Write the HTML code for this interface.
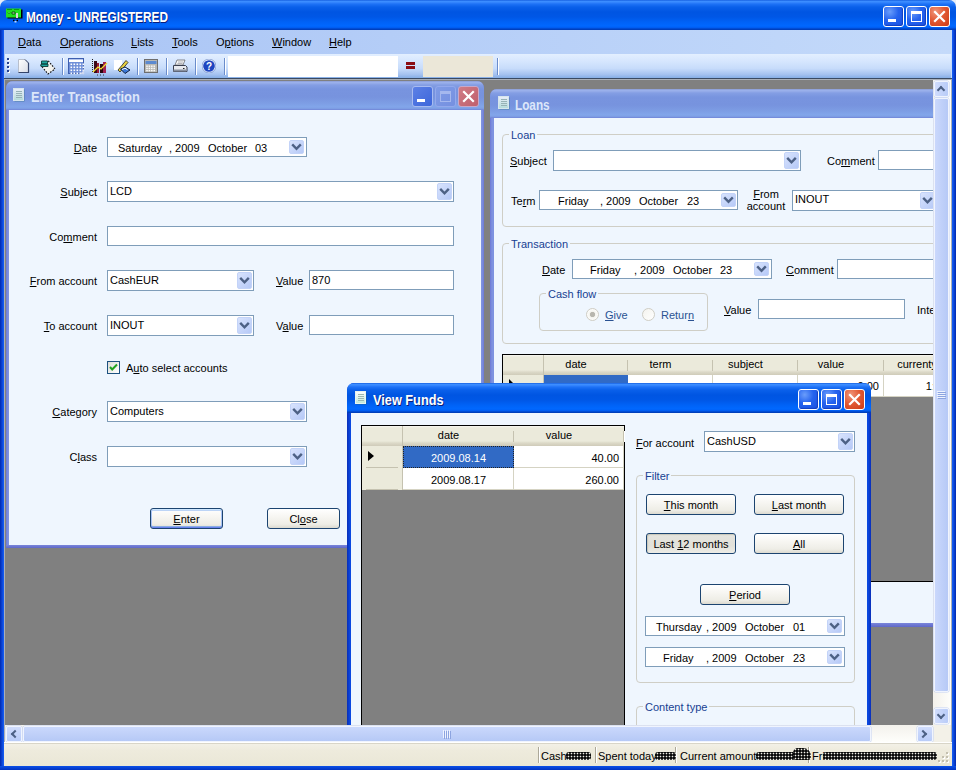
<!DOCTYPE html>
<html><head><meta charset="utf-8"><style>
*{margin:0;padding:0;box-sizing:border-box}
html,body{width:956px;height:770px;overflow:hidden;background:#808080}
body{position:relative;font-family:"Liberation Sans",sans-serif;font-size:11px;color:#000}
.a{position:absolute}
.t{position:absolute;white-space:nowrap;line-height:13px}
u{text-decoration:underline;text-underline-offset:1px}
.tb{position:absolute;background:#fff;border:1px solid #7F9DB9}
.dd{position:absolute;border-radius:2px;background:linear-gradient(135deg,#D8E3FD,#B6C9F7);border:1px solid #C3D3F8}
.dd i{position:absolute;left:4px;top:2px;width:5px;height:5px;border-right:2px solid #4D6185;border-bottom:2px solid #4D6185;transform:rotate(45deg)}
.btn{position:absolute;border:1px solid #1C4470;border-radius:3px;background:linear-gradient(#FFFFFF 0%,#F7F6F2 40%,#EEEDE6 80%,#DCDAD0 100%);text-align:center;line-height:18px;padding-top:1px}
.gb{position:absolute;border:1px solid #CFCEC6;border-radius:4px}
.gbt{color:#173F92;background:#EFF6FE}
.ttxt{position:absolute;font-weight:bold;font-size:14px;letter-spacing:0px;white-space:nowrap;line-height:15px;transform-origin:0 0}
.clip{position:absolute;overflow:hidden}
.grid-h{position:absolute;background:linear-gradient(#F7F6F0 0,#EBEADB 2px,#EBEADB 15px,#DCD9C8 17px,#CFCBB9 20px);text-align:center;line-height:19px;padding-right:20px}
.grid-h:after{content:'';position:absolute;right:0;top:5px;bottom:4px;width:1px;background:#C5C2B0;box-shadow:1px 0 0 #fff}
.rh{position:absolute;background:#EBEADB;border-right:1px solid #C5C2B0}
.rh:after{content:'';position:absolute;left:4px;right:4px;bottom:0;height:1px;background:#C5C2B0}
.cell{position:absolute;background:#fff;border-right:1px solid #D5D3C3;border-bottom:1px solid #D5D3C3;line-height:21px}
</style></head><body>
<svg width="0" height="0" style="position:absolute"><defs><linearGradient id="dg" x1="0" y1="0" x2="0" y2="1"><stop offset="0" stop-color="#FFFFFF"/><stop offset="1" stop-color="#BFE8D8"/></linearGradient></defs></svg>
<div class="a" style="left:0px;top:0px;width:956px;height:12px;background:#E8EEF8"></div>
<div class="a" style="left:0px;top:0px;width:956px;height:30px;border-radius:7px 7px 0 0;background:linear-gradient(#0A50D8 0px,#3D90FF 1px,#3A8AFF 2px,#1E72F6 4px,#0A60EA 7px,#0055E2 12px,#0057E6 17px,#0062F6 22px,#0068FF 26px,#005AEE 28px,#003FBC 29px,#003FBC 30px)"></div>
<div class="ttxt" style="left:26px;top:10px;color:#fff;transform:scaleX(0.845);text-shadow:1px 1px 0 #0A1E7A">Money - UNREGISTERED</div>
<div class="a" style="left:883px;top:6px;width:21px;height:21px;border:1px solid #fff;border-radius:3px;background:radial-gradient(circle at 30% 25%,#6A9DFB 0,#2563EE 45%,#1A4FE0 100%);box-shadow:inset -1px -1px 1px #1340C0"></div>
<div class="a" style="left:888px;top:19px;width:8px;height:3px;background:#fff"></div>
<div class="a" style="left:906px;top:6px;width:21px;height:21px;border:1px solid #fff;border-radius:3px;background:radial-gradient(circle at 30% 25%,#6A9DFB 0,#2563EE 45%,#1A4FE0 100%);box-shadow:inset -1px -1px 1px #1340C0"></div>
<div class="a" style="left:911px;top:11px;width:11px;height:11px;border:1px solid #fff;border-top-width:3px"></div>
<div class="a" style="left:929px;top:6px;width:21px;height:21px;border:1px solid #fff;border-radius:3px;background:radial-gradient(circle at 30% 25%,#F0967A 0,#E25A35 45%,#CC3A14 100%)"></div>
<svg class="a" style="left:929px;top:6px" width="21" height="21"><path d="M6 6 L15 15 M15 6 L6 15" stroke="#fff" stroke-width="2.2" stroke-linecap="square"/></svg>
<svg class="a" style="left:6px;top:8px" width="17" height="15"><rect x="1.5" y="1.5" width="15" height="9" fill="#000"/><rect x="0" y="0.5" width="15" height="9" fill="#20E020"/><path d="M1 1.5h5M8 1.5h5" stroke="#0A8A0A" stroke-width="0.8"/><path d="M2 4.5 l1 1 l1 -1 M6 4 h3 v2 h-3z" stroke="#064806" stroke-width="0.9" fill="#B8F0B8"/><rect x="10" y="5" width="2" height="5" fill="#D8D8D8"/><path d="M7 12.5h1.5M10.5 12.5h1.5" stroke="#000" stroke-width="1.4"/><rect x="8.5" y="13" width="2" height="1.5" fill="#C0D8FF"/></svg>
<div class="a" style="left:0px;top:30px;width:4px;height:740px;background:linear-gradient(90deg,#0028B0,#1660F8)"></div>
<div class="a" style="left:4px;top:79px;width:1px;height:663px;background:#A9AFB8"></div>
<div class="a" style="left:952px;top:30px;width:4px;height:740px;background:linear-gradient(90deg,#1660F8,#0028B0)"></div>
<div class="a" style="left:951px;top:79px;width:1px;height:663px;background:#A9AFB8"></div>
<div class="a" style="left:0px;top:766px;width:956px;height:4px;background:linear-gradient(#0A50E8,#0032C0)"></div>
<div class="a" style="left:4px;top:30px;width:948px;height:24px;background:linear-gradient(90deg,#A9C4F5,#C4DAFA)"></div>
<div class="a" style="left:4px;top:54px;width:948px;height:25px;background:linear-gradient(90deg,#A9C4F5,#C4DAFA)"></div>
<div class="t" style="left:18px;top:36px;"><u>D</u>ata</div>
<div class="t" style="left:60px;top:36px;"><u>O</u>perations</div>
<div class="t" style="left:131px;top:36px;"><u>L</u>ists</div>
<div class="t" style="left:172px;top:36px;"><u>T</u>ools</div>
<div class="t" style="left:216px;top:36px;">O<u>p</u>tions</div>
<div class="t" style="left:272px;top:36px;"><u>W</u>indow</div>
<div class="t" style="left:329px;top:36px;"><u>H</u>elp</div>
<div class="a" style="left:5px;top:54px;width:946px;height:24px;background:linear-gradient(#E3EFFF 0%,#D6E6FE 30%,#C7DCFB 60%,#A5C2F0 85%,#86AEE6 100%)"></div>
<div class="a" style="left:4px;top:78px;width:948px;height:1px;background:#3A4A62"></div>
<div class="a" style="left:4px;top:79px;width:948px;height:1px;background:#A9AFB8"></div>
<div class="a" style="left:7px;top:58px;width:2px;height:2px;background:#27418F;box-shadow:1px 1px 0 #fff"></div>
<div class="a" style="left:7px;top:62px;width:2px;height:2px;background:#27418F;box-shadow:1px 1px 0 #fff"></div>
<div class="a" style="left:7px;top:66px;width:2px;height:2px;background:#27418F;box-shadow:1px 1px 0 #fff"></div>
<div class="a" style="left:7px;top:70px;width:2px;height:2px;background:#27418F;box-shadow:1px 1px 0 #fff"></div>
<div class="a" style="left:62px;top:58px;width:1px;height:17px;background:#6A8CCB;box-shadow:1px 0 0 #fff"></div>
<div class="a" style="left:137px;top:58px;width:1px;height:17px;background:#6A8CCB;box-shadow:1px 0 0 #fff"></div>
<div class="a" style="left:166px;top:58px;width:1px;height:17px;background:#6A8CCB;box-shadow:1px 0 0 #fff"></div>
<div class="a" style="left:195px;top:58px;width:1px;height:17px;background:#6A8CCB;box-shadow:1px 0 0 #fff"></div>
<div class="a" style="left:224px;top:58px;width:1px;height:17px;background:#6A8CCB;box-shadow:1px 0 0 #fff"></div>
<div class="a" style="left:497px;top:58px;width:1px;height:17px;background:#6A8CCB;box-shadow:1px 0 0 #fff"></div>
<svg class="a" style="left:17px;top:58px" width="14" height="16"><defs><linearGradient id="pg" x1="0" y1="0" x2="1" y2="1"><stop offset="0" stop-color="#FFFFFF"/><stop offset="1" stop-color="#D8DCE6"/></linearGradient></defs><path d="M1.5 1.5 H8 L11.5 5 V14.5 H1.5 Z" fill="url(#pg)" stroke="#B8BFCC"/><path d="M11.5 5 V14.5 H1.5" fill="none" stroke="#34446A" stroke-width="1.2"/><path d="M8 1.5 L11.5 5" stroke="#34446A"/></svg>
<svg class="a" style="left:39px;top:58px" width="17" height="17"><path d="M2 7.5 L9 2.5 L16 11 L9 16 Z" fill="#F2F2EE" stroke="#111" stroke-dasharray="1.6 1.4" stroke-width="1.1"/><path d="M2.5 3 h6 v3 h-6z M2 6 h7 v2.5 h-7z" fill="#1FA8A0" stroke="#0C3C3A" stroke-width="0.9"/></svg>
<svg class="a" style="left:68px;top:58px" width="17" height="17"><rect x="0.5" y="0.5" width="15" height="15" fill="#6F8FD8" stroke="#3E5FB0"/><rect x="1" y="1.5" width="14" height="2.5" fill="#fff"/><rect x="2.5" y="5.5" width="1.6" height="1.6" fill="#fff"/><rect x="2.5" y="8.5" width="1.6" height="1.6" fill="#fff"/><rect x="2.5" y="11.5" width="1.6" height="1.6" fill="#fff"/><rect x="2.5" y="14.5" width="1.6" height="1.6" fill="#fff"/><rect x="5.5" y="5.5" width="1.6" height="1.6" fill="#fff"/><rect x="5.5" y="8.5" width="1.6" height="1.6" fill="#fff"/><rect x="5.5" y="11.5" width="1.6" height="1.6" fill="#fff"/><rect x="5.5" y="14.5" width="1.6" height="1.6" fill="#fff"/><rect x="8.5" y="5.5" width="1.6" height="1.6" fill="#fff"/><rect x="8.5" y="8.5" width="1.6" height="1.6" fill="#fff"/><rect x="8.5" y="11.5" width="1.6" height="1.6" fill="#fff"/><rect x="8.5" y="14.5" width="1.6" height="1.6" fill="#fff"/><rect x="11.5" y="5.5" width="1.6" height="1.6" fill="#fff"/><rect x="11.5" y="8.5" width="1.6" height="1.6" fill="#fff"/><rect x="11.5" y="11.5" width="1.6" height="1.6" fill="#fff"/><rect x="11.5" y="14.5" width="1.6" height="1.6" fill="#fff"/><rect x="14.5" y="5.5" width="1.6" height="1.6" fill="#fff"/><rect x="14.5" y="8.5" width="1.6" height="1.6" fill="#fff"/><rect x="14.5" y="11.5" width="1.6" height="1.6" fill="#fff"/><rect x="14.5" y="14.5" width="1.6" height="1.6" fill="#fff"/><path d="M12 16 L16 12 V16Z" fill="#D0D8F0"/></svg>
<svg class="a" style="left:91px;top:58px" width="17" height="18"><path d="M1.5 1 V15" stroke="#222" stroke-dasharray="1 1"/><rect x="3" y="3" width="3" height="12" fill="#3A0818"/><rect x="6" y="5" width="2" height="10" fill="#9A1838"/><rect x="9" y="6" width="3" height="9" fill="#2A0610"/><rect x="12" y="4" width="3" height="11" fill="#A02050"/><path d="M2 14 L7 9 L10 11 L16 5" stroke="#F4DC30" stroke-width="1.3" fill="none"/><path d="M6 17h1M9 17h1M12 17h1" stroke="#333"/></svg>
<svg class="a" style="left:113px;top:58px" width="18" height="17"><rect x="1" y="2" width="8" height="10" fill="#fff"/><path d="M5 12 L13 2.5 L15 4.5 L7 14 Z" fill="#E8D040" stroke="#222" stroke-width="0.8"/><path d="M7.5 11 L12 9 L17 12 L12 15.5 Z" fill="#3A78D8" stroke="#102040" stroke-width="1"/><path d="M9 11.5 L12 10.2 L14.5 11.8" stroke="#fff" fill="none"/></svg>
<svg class="a" style="left:144px;top:59px" width="14" height="14"><rect x="0.5" y="0.5" width="13" height="13" fill="#B8B8B4" stroke="#6E6E6E"/><rect x="1.5" y="2" width="11" height="3" fill="#5C8AD0"/><rect x="2.2" y="6.5" width="1.6" height="1.4" fill="#FAFAFA"/><rect x="2.2" y="8.7" width="1.6" height="1.4" fill="#FAFAFA"/><rect x="2.2" y="10.9" width="1.6" height="1.4" fill="#FAFAFA"/><rect x="4.6" y="6.5" width="1.6" height="1.4" fill="#FAFAFA"/><rect x="4.6" y="8.7" width="1.6" height="1.4" fill="#FAFAFA"/><rect x="4.6" y="10.9" width="1.6" height="1.4" fill="#FAFAFA"/><rect x="7.0" y="6.5" width="1.6" height="1.4" fill="#FAFAFA"/><rect x="7.0" y="8.7" width="1.6" height="1.4" fill="#FAFAFA"/><rect x="7.0" y="10.9" width="1.6" height="1.4" fill="#FAFAFA"/><rect x="9.399999999999999" y="6.5" width="1.6" height="1.4" fill="#FAFAFA"/><rect x="9.399999999999999" y="8.7" width="1.6" height="1.4" fill="#FAFAFA"/><rect x="9.399999999999999" y="10.9" width="1.6" height="1.4" fill="#FAFAFA"/></svg>
<svg class="a" style="left:172px;top:59px" width="16" height="14"><path d="M5 1 L13 1 L11 6 L3 6 Z" fill="#F8F8F8" stroke="#6A6A70" stroke-width="0.8"/><path d="M6 3h5M5.5 4.5h5" stroke="#9A9AA0" stroke-width="0.7"/><path d="M1.5 6.5 H13.5 L15 8 V12.5 H1.5 Z" fill="#E8EAF0" stroke="#3A3F50"/><rect x="1.5" y="10.5" width="13" height="2" fill="#8890A0"/><rect x="11" y="9" width="1.5" height="1" fill="#222"/></svg>
<svg class="a" style="left:202px;top:59px" width="14" height="14"><circle cx="7" cy="7" r="6.4" fill="#1E45C0" stroke="#E8F0FF" stroke-width="1.1"/><circle cx="7" cy="7" r="7" fill="none" stroke="#3050A0" stroke-width="0.4"/><text x="7" y="11" font-family="Liberation Sans" font-weight="bold" font-size="10" fill="#fff" text-anchor="middle">?</text></svg>
<div class="a" style="left:228px;top:56px;width:170px;height:21px;background:#fff"></div>
<div class="a" style="left:406px;top:62px;width:9px;height:3px;background:#8B0D14"></div>
<div class="a" style="left:406px;top:66px;width:9px;height:3px;background:#8B0D14"></div>
<div class="a" style="left:423px;top:56px;width:70px;height:21px;background:#EBE7D8"></div>
<div class="a" style="left:5px;top:80px;width:928px;height:645px;background:#808080"></div>
<div class="a" style="left:6px;top:81px;width:478px;height:467px;background:linear-gradient(90deg,#6C78D4,#7E92E0 2px,#7E92E0 calc(100% - 2px),#6C78D4);border-radius:7px 7px 0 0"></div>
<div class="a" style="left:6px;top:545px;width:478px;height:3px;background:linear-gradient(#7A86DA,#5F68C8)"></div>
<div class="a" style="left:6px;top:81px;width:478px;height:29px;border-radius:7px 7px 0 0;background:linear-gradient(#8494CC 0px,#9CB2EC 1px,#98AEEA 2px,#849EE4 4px,#7894DF 8px,#7793DE 16px,#7D9DE4 22px,#82A6EA 26px,#7C9AE2 28px,#6C7ED4 29px)"></div>
<div class="a" style="left:9px;top:110px;width:472px;height:435px;background:#EFF6FE"></div>
<div class="ttxt" style="left:31px;top:90px;color:#DCE6FA;transform:scaleX(0.92)">Enter Transaction</div>
<div class="a" style="left:412px;top:86px;width:21px;height:21px;border:1px solid #A8BBF0;border-radius:3px;background:linear-gradient(135deg,#5C80E6,#3D66DA)"></div>
<div class="a" style="left:417px;top:99px;width:8px;height:3px;background:#fff"></div>
<div class="a" style="left:435px;top:86px;width:21px;height:21px;border:1px solid #93A9EC;border-radius:3px;background:linear-gradient(135deg,#7F9BE6,#7590E0)"></div>
<div class="a" style="left:440px;top:91px;width:11px;height:11px;border:1px solid #A5B8EE;border-top-width:3px"></div>
<div class="a" style="left:458px;top:86px;width:21px;height:21px;border:1px solid #C8A8C8;border-radius:3px;background:linear-gradient(135deg,#D07C86,#BF5F6C)"></div>
<svg class="a" style="left:458px;top:86px" width="21" height="21"><path d="M6 6 L15 15 M15 6 L6 15" stroke="#fff" stroke-width="2.2" stroke-linecap="square"/></svg>
<svg class="a" style="left:13px;top:88px;opacity:0.85" width="13" height="15"><rect x="1.5" y="1.5" width="10" height="12" fill="#1E6B6B" opacity="0.55"/><rect x="0.5" y="0.5" width="10" height="12" fill="url(#dg)" stroke="#E8F4F0" stroke-width="1"/><g stroke="#9DB8B0" stroke-width="1"><path d="M3 3.5h6M3 5.5h6M3 7.5h6M3 9.5h6"/></g></svg>
<div class="t" style="left:-203px;width:300px;text-align:right;top:142px;"><u>D</u>ate</div>
<div class="tb" style="left:107px;top:137px;width:200px;height:20px;"></div>
<div class="t" style="left:118px;top:142px;">Saturday</div>
<div class="t" style="left:169px;top:142px;">, 2009</div>
<div class="t" style="left:208px;top:142px;">October</div>
<div class="t" style="left:255px;top:142px;">03</div>
<div class="dd" style="left:289px;top:140px;width:15px;height:14px"><svg width="15" height="14" style="position:absolute;left:-1px;top:-1px"><path d="M3.2 4.4 L7.5 8.8 L11.8 4.4" stroke="#4D6185" stroke-width="2.4" fill="none"/></svg></div>
<div class="t" style="left:-203px;width:300px;text-align:right;top:186px;"><u>S</u>ubject</div>
<div class="tb" style="left:107px;top:181px;width:347px;height:21px;"></div>
<div class="t" style="left:110px;top:185px;">LCD</div>
<div class="dd" style="left:437px;top:183px;width:15px;height:17px"><svg width="15" height="17" style="position:absolute;left:-1px;top:-1px"><path d="M3.2 5.9 L7.5 10.3 L11.8 5.9" stroke="#4D6185" stroke-width="2.4" fill="none"/></svg></div>
<div class="t" style="left:-203px;width:300px;text-align:right;top:231px;">Co<u>m</u>ment</div>
<div class="tb" style="left:107px;top:226px;width:347px;height:20px;"></div>
<div class="t" style="left:-203px;width:300px;text-align:right;top:275px;"><u>F</u>rom account</div>
<div class="tb" style="left:107px;top:270px;width:147px;height:21px;"></div>
<div class="t" style="left:110px;top:274px;">CashEUR</div>
<div class="dd" style="left:237px;top:272px;width:15px;height:17px"><svg width="15" height="17" style="position:absolute;left:-1px;top:-1px"><path d="M3.2 5.9 L7.5 10.3 L11.8 5.9" stroke="#4D6185" stroke-width="2.4" fill="none"/></svg></div>
<div class="t" style="left:276px;top:275px;"><u>V</u>alue</div>
<div class="tb" style="left:309px;top:270px;width:145px;height:20px;"></div>
<div class="t" style="left:312px;top:274px;">870</div>
<div class="t" style="left:-203px;width:300px;text-align:right;top:320px;"><u>T</u>o account</div>
<div class="tb" style="left:107px;top:315px;width:147px;height:21px;"></div>
<div class="t" style="left:110px;top:319px;">INOUT</div>
<div class="dd" style="left:237px;top:317px;width:15px;height:17px"><svg width="15" height="17" style="position:absolute;left:-1px;top:-1px"><path d="M3.2 5.9 L7.5 10.3 L11.8 5.9" stroke="#4D6185" stroke-width="2.4" fill="none"/></svg></div>
<div class="t" style="left:276px;top:320px;">V<u>a</u>lue</div>
<div class="tb" style="left:309px;top:315px;width:145px;height:20px;"></div>
<div class="a" style="left:107px;top:361px;width:13px;height:13px;background:linear-gradient(135deg,#DCDCD7,#fff);border:1px solid #1C5180"></div>
<svg class="a" style="left:107px;top:361px" width="13" height="13"><path d="M3 6 L5.2 8.5 L10 3.5" stroke="#21A121" stroke-width="2" fill="none"/></svg>
<div class="t" style="left:126px;top:362px;">A<u>u</u>to select accounts</div>
<div class="t" style="left:-203px;width:300px;text-align:right;top:406px;"><u>C</u>ategory</div>
<div class="tb" style="left:107px;top:401px;width:200px;height:21px;"></div>
<div class="t" style="left:110px;top:405px;">Computers</div>
<div class="dd" style="left:290px;top:403px;width:15px;height:17px"><svg width="15" height="17" style="position:absolute;left:-1px;top:-1px"><path d="M3.2 5.9 L7.5 10.3 L11.8 5.9" stroke="#4D6185" stroke-width="2.4" fill="none"/></svg></div>
<div class="t" style="left:-203px;width:300px;text-align:right;top:451px;">C<u>l</u>ass</div>
<div class="tb" style="left:107px;top:446px;width:200px;height:21px;"></div>
<div class="dd" style="left:290px;top:448px;width:15px;height:17px"><svg width="15" height="17" style="position:absolute;left:-1px;top:-1px"><path d="M3.2 5.9 L7.5 10.3 L11.8 5.9" stroke="#4D6185" stroke-width="2.4" fill="none"/></svg></div>
<div class="btn" style="left:150px;top:508px;width:73px;height:21px;box-shadow:inset 0 1px 0 #CEE7FF,inset 0 -1px 0 #6982EE,inset 1px 0 0 #A9C3F5,inset -1px 0 0 #A9C3F5,inset 0 2px 0 #BCD4F6,inset 0 -2px 0 #89ADE4"><u>E</u>nter</div>
<div class="btn" style="left:267px;top:508px;width:73px;height:21px;">Cl<u>o</u>se</div>
<div class="clip" style="left:0;top:0;width:933px;height:725px">
<div class="a" style="left:490px;top:89px;width:520px;height:538px;background:linear-gradient(90deg,#6C78D4,#7E92E0 2px,#7E92E0 calc(100% - 2px),#6C78D4);border-radius:7px 7px 0 0"></div>
<div class="a" style="left:490px;top:623px;width:520px;height:4px;background:linear-gradient(#7A86DA,#5F68C8)"></div>
<div class="a" style="left:490px;top:89px;width:520px;height:29px;border-radius:7px 7px 0 0;background:linear-gradient(#8494CC 0px,#9CB2EC 1px,#98AEEA 2px,#849EE4 4px,#7894DF 8px,#7793DE 16px,#7D9DE4 22px,#82A6EA 26px,#7C9AE2 28px,#6C7ED4 29px)"></div>
<div class="a" style="left:494px;top:118px;width:512px;height:505px;background:#EFF6FE"></div>
<div class="ttxt" style="left:515px;top:98px;color:#DCE6FA;transform:scaleX(0.84)">Loans</div>
<svg class="a" style="left:498px;top:96px;opacity:0.85" width="13" height="15"><rect x="1.5" y="1.5" width="10" height="12" fill="#1E6B6B" opacity="0.55"/><rect x="0.5" y="0.5" width="10" height="12" fill="url(#dg)" stroke="#E8F4F0" stroke-width="1"/><g stroke="#9DB8B0" stroke-width="1"><path d="M3 3.5h6M3 5.5h6M3 7.5h6M3 9.5h6"/></g></svg>
<div class="gb" style="left:502px;top:134px;width:498px;height:93px"></div>
<div class="t gbt" style="left:509px;top:129px;padding:0 2px">Loan</div>
<div class="t" style="left:510px;top:155px;"><u>S</u>ubject</div>
<div class="tb" style="left:553px;top:150px;width:248px;height:21px;"></div>
<div class="dd" style="left:784px;top:152px;width:15px;height:17px"><svg width="15" height="17" style="position:absolute;left:-1px;top:-1px"><path d="M3.2 5.9 L7.5 10.3 L11.8 5.9" stroke="#4D6185" stroke-width="2.4" fill="none"/></svg></div>
<div class="t" style="left:827px;top:155px;">Co<u>m</u>ment</div>
<div class="tb" style="left:878px;top:150px;width:122px;height:20px;"></div>
<div class="t" style="left:511px;top:195px;">Te<u>r</u>m</div>
<div class="tb" style="left:539px;top:190px;width:199px;height:20px;"></div>
<div class="t" style="left:558px;top:195px;">Friday</div>
<div class="t" style="left:600px;top:195px;">, 2009</div>
<div class="t" style="left:639px;top:195px;">October</div>
<div class="t" style="left:687px;top:195px;">23</div>
<div class="dd" style="left:721px;top:193px;width:15px;height:14px"><svg width="15" height="14" style="position:absolute;left:-1px;top:-1px"><path d="M3.2 4.4 L7.5 8.8 L11.8 4.4" stroke="#4D6185" stroke-width="2.4" fill="none"/></svg></div>
<div class="t" style="left:744px;width:44px;top:188px;text-align:center;"><u>F</u>rom</div>
<div class="t" style="left:744px;width:44px;top:200px;text-align:center;">account</div>
<div class="tb" style="left:792px;top:190px;width:208px;height:21px;"></div>
<div class="t" style="left:795px;top:193px;">INOUT</div>
<div class="dd" style="left:983px;top:192px;width:15px;height:17px"><svg width="15" height="17" style="position:absolute;left:-1px;top:-1px"><path d="M3.2 5.9 L7.5 10.3 L11.8 5.9" stroke="#4D6185" stroke-width="2.4" fill="none"/></svg></div>
<div class="dd" style="left:920px;top:192px;width:15px;height:17px"><svg width="15" height="17" style="position:absolute;left:-1px;top:-1px"><path d="M3.2 5.9 L7.5 10.3 L11.8 5.9" stroke="#4D6185" stroke-width="2.4" fill="none"/></svg></div>
<div class="gb" style="left:502px;top:243px;width:498px;height:101px"></div>
<div class="t gbt" style="left:509px;top:238px;padding:0 2px">Transaction</div>
<div class="t" style="left:542px;top:264px;"><u>D</u>ate</div>
<div class="tb" style="left:572px;top:259px;width:200px;height:20px;"></div>
<div class="t" style="left:590px;top:264px;">Friday</div>
<div class="t" style="left:634px;top:264px;">, 2009</div>
<div class="t" style="left:673px;top:264px;">October</div>
<div class="t" style="left:720px;top:264px;">23</div>
<div class="dd" style="left:754px;top:262px;width:15px;height:14px"><svg width="15" height="14" style="position:absolute;left:-1px;top:-1px"><path d="M3.2 4.4 L7.5 8.8 L11.8 4.4" stroke="#4D6185" stroke-width="2.4" fill="none"/></svg></div>
<div class="t" style="left:786px;top:264px;"><u>C</u>omment</div>
<div class="tb" style="left:837px;top:259px;width:163px;height:20px;"></div>
<div class="gb" style="left:539px;top:293px;width:169px;height:38px"></div>
<div class="t gbt" style="left:546px;top:288px;padding:0 2px">Cash flow</div>
<div class="a" style="left:586px;top:308px;width:13px;height:13px;border-radius:50%;border:1px solid #CFCDC4;background:radial-gradient(circle,#B8B6AE 0 2.2px,#F4F3EE 3px,#FFFFFF 6px)"></div>
<div class="t" style="left:605px;top:309px;color:#2A5292"><u>G</u>ive</div>
<div class="a" style="left:642px;top:308px;width:13px;height:13px;border-radius:50%;border:1px solid #CFCDC4;background:linear-gradient(135deg,#F4F3EE,#FFFFFF)"></div>
<div class="t" style="left:661px;top:309px;color:#2A5292">Retur<u>n</u></div>
<div class="t" style="left:724px;top:304px;"><u>V</u>alue</div>
<div class="tb" style="left:758px;top:299px;width:147px;height:20px;"></div>
<div class="t" style="left:917px;top:304px;">Inte</div>
<div class="a" style="left:502px;top:354px;width:440px;height:228px;background:#808080;border:1px solid #000"></div>
<div class="grid-h" style="left:503px;top:355px;width:41px;height:20px;box-shadow:inset -1px 0 0 #C5C2B0"></div>
<div class="grid-h" style="left:544px;top:355px;width:84px;height:20px">date</div>
<div class="grid-h" style="left:628px;top:355px;width:85px;height:20px">term</div>
<div class="grid-h" style="left:713px;top:355px;width:85px;height:20px">subject</div>
<div class="grid-h" style="left:798px;top:355px;width:86px;height:20px">value</div>
<div class="grid-h" style="left:884px;top:355px;width:86px;height:20px">currenty</div>
<div class="rh" style="left:503px;top:375px;width:41px;height:22px"></div>
<div class="a" style="left:544px;top:375px;width:84px;height:22px;background:#316AC5"></div>
<div class="cell" style="left:628px;top:375px;width:85px;height:22px"></div>
<div class="cell" style="left:713px;top:375px;width:85px;height:22px"></div>
<div class="cell" style="left:798px;top:375px;width:86px;height:22px"></div>
<div class="cell" style="left:884px;top:375px;width:76px;height:22px"></div>
<div class="t" style="left:579px;width:300px;text-align:right;top:380px;">0.00</div>
<div class="t" style="left:635px;width:300px;text-align:right;top:380px;">1:</div>
<div class="a" style="left:509px;top:379px;width:0;height:0;border-left:5px solid #000;border-top:5px solid transparent;border-bottom:5px solid transparent"></div>
</div>
<div class="clip" style="left:0;top:0;width:933px;height:725px">
<div class="a" style="left:347px;top:383px;width:524px;height:420px;background:linear-gradient(90deg,#0A2EB8,#0A48E0 3px,#0A48E0 calc(100% - 3px),#0A2EB8);border-radius:7px 7px 0 0"></div>
<div class="a" style="left:347px;top:383px;width:524px;height:30px;border-radius:7px 7px 0 0;background:linear-gradient(#0A50D8 0px,#3D90FF 1px,#3A8AFF 2px,#1E72F6 4px,#0A60EA 7px,#0055E2 12px,#0057E6 17px,#0062F6 22px,#0068FF 26px,#005AEE 28px,#003FBC 29px,#003FBC 30px)"></div>
<div class="a" style="left:351px;top:413px;width:516px;height:390px;background:#EFF6FE"></div>
<div class="ttxt" style="left:373px;top:393px;color:#fff;text-shadow:1px 1px 0 #0A1E7A;transform:scaleX(0.91)">View Funds</div>
<div class="a" style="left:798px;top:389px;width:21px;height:21px;border:1px solid #fff;border-radius:3px;background:radial-gradient(circle at 30% 25%,#6A9DFB 0,#2563EE 45%,#1A4FE0 100%);box-shadow:inset -1px -1px 1px #1340C0"></div>
<div class="a" style="left:803px;top:402px;width:8px;height:3px;background:#fff"></div>
<div class="a" style="left:821px;top:389px;width:21px;height:21px;border:1px solid #fff;border-radius:3px;background:radial-gradient(circle at 30% 25%,#6A9DFB 0,#2563EE 45%,#1A4FE0 100%);box-shadow:inset -1px -1px 1px #1340C0"></div>
<div class="a" style="left:826px;top:394px;width:11px;height:11px;border:1px solid #fff;border-top-width:3px"></div>
<div class="a" style="left:844px;top:389px;width:21px;height:21px;border:1px solid #fff;border-radius:3px;background:radial-gradient(circle at 30% 25%,#F0967A 0,#E25A35 45%,#CC3A14 100%)"></div>
<svg class="a" style="left:844px;top:389px" width="21" height="21"><path d="M6 6 L15 15 M15 6 L6 15" stroke="#fff" stroke-width="2.2" stroke-linecap="square"/></svg>
<svg class="a" style="left:355px;top:391px;opacity:1" width="13" height="15"><rect x="1.5" y="1.5" width="10" height="12" fill="#1E6B6B" opacity="0.55"/><rect x="0.5" y="0.5" width="10" height="12" fill="url(#dg)" stroke="#E8F4F0" stroke-width="1"/><g stroke="#9DB8B0" stroke-width="1"><path d="M3 3.5h6M3 5.5h6M3 7.5h6M3 9.5h6"/></g></svg>
<div class="a" style="left:361px;top:425px;width:264px;height:320px;background:#808080;border:1px solid #000"></div>
<div class="grid-h" style="left:362px;top:426px;width:41px;height:20px;box-shadow:inset -1px 0 0 #C5C2B0"></div>
<div class="grid-h" style="left:403px;top:426px;width:111px;height:20px">date</div>
<div class="grid-h" style="left:514px;top:426px;width:110px;height:20px">value</div>
<div class="rh" style="left:362px;top:446px;width:41px;height:22px"></div>
<div class="rh" style="left:362px;top:468px;width:41px;height:22px"></div>
<div class="a" style="left:403px;top:446px;width:111px;height:22px;background:#316AC5;border:1px dotted #222"></div>
<div class="t" style="left:403px;width:111px;top:452px;text-align:center;color:#fff">2009.08.14</div>
<div class="cell" style="left:514px;top:446px;width:110px;height:22px"></div>
<div class="t" style="left:319px;width:300px;text-align:right;top:452px;">40.00</div>
<div class="cell" style="left:403px;top:468px;width:111px;height:22px"></div>
<div class="cell" style="left:514px;top:468px;width:110px;height:22px"></div>
<div class="t" style="left:403px;width:111px;top:474px;text-align:center;">2009.08.17</div>
<div class="t" style="left:319px;width:300px;text-align:right;top:474px;">260.00</div>
<div class="a" style="left:368px;top:451px;width:0;height:0;border-left:6px solid #000;border-top:5px solid transparent;border-bottom:5px solid transparent"></div>
<div class="t" style="left:636px;top:437px;"><u>F</u>or account</div>
<div class="tb" style="left:704px;top:431px;width:151px;height:21px;"></div>
<div class="t" style="left:707px;top:435px;">CashUSD</div>
<div class="dd" style="left:838px;top:433px;width:15px;height:17px"><svg width="15" height="17" style="position:absolute;left:-1px;top:-1px"><path d="M3.2 5.9 L7.5 10.3 L11.8 5.9" stroke="#4D6185" stroke-width="2.4" fill="none"/></svg></div>
<div class="gb" style="left:636px;top:475px;width:219px;height:208px"></div>
<div class="t gbt" style="left:643px;top:470px;padding:0 2px">Filter</div>
<div class="btn" style="left:646px;top:494px;width:90px;height:21px;"><u>T</u>his month</div>
<div class="btn" style="left:754px;top:494px;width:90px;height:21px;"><u>L</u>ast month</div>
<div class="btn" style="left:646px;top:533px;width:90px;height:21px;background:linear-gradient(#E5E4DE,#E2E1DA 60%,#EDECE6);box-shadow:inset 1px 1px 1px #C9C7BA">Last <u>1</u>2 months</div>
<div class="btn" style="left:754px;top:533px;width:90px;height:21px;"><u>A</u>ll</div>
<div class="btn" style="left:700px;top:584px;width:90px;height:21px;"><u>P</u>eriod</div>
<div class="tb" style="left:645px;top:616px;width:200px;height:20px;"></div>
<div class="t" style="left:656px;top:621px;">Thursday</div>
<div class="t" style="left:706px;top:621px;">, 2009</div>
<div class="t" style="left:745px;top:621px;">October</div>
<div class="t" style="left:793px;top:621px;">01</div>
<div class="dd" style="left:827px;top:619px;width:15px;height:14px"><svg width="15" height="14" style="position:absolute;left:-1px;top:-1px"><path d="M3.2 4.4 L7.5 8.8 L11.8 4.4" stroke="#4D6185" stroke-width="2.4" fill="none"/></svg></div>
<div class="tb" style="left:645px;top:647px;width:200px;height:20px;"></div>
<div class="t" style="left:663px;top:652px;">Friday</div>
<div class="t" style="left:706px;top:652px;">, 2009</div>
<div class="t" style="left:745px;top:652px;">October</div>
<div class="t" style="left:793px;top:652px;">23</div>
<div class="dd" style="left:827px;top:650px;width:15px;height:14px"><svg width="15" height="14" style="position:absolute;left:-1px;top:-1px"><path d="M3.2 4.4 L7.5 8.8 L11.8 4.4" stroke="#4D6185" stroke-width="2.4" fill="none"/></svg></div>
<div class="gb" style="left:636px;top:706px;width:219px;height:54px"></div>
<div class="t gbt" style="left:643px;top:701px;padding:0 2px">Content type</div>
</div>
<div class="a" style="left:5px;top:725px;width:928px;height:17px;background:linear-gradient(#F3F1EC,#FEFEFB)"></div>
<div class="a" style="left:933px;top:80px;width:18px;height:645px;background:linear-gradient(90deg,#F3F1EC,#FEFEFB)"></div>
<div class="a" style="left:933px;top:725px;width:18px;height:17px;background:#F3F1E8"></div>
<div class="a" style="left:934px;top:81px;width:15px;height:16px;border:1px solid #F0F4FE;border-radius:2px;box-shadow:0 0 0 0.5px #C4D2F4;background:linear-gradient(90deg,#D0DCFC,#B9CCF8)"></div>
<div class="a" style="left:938px;top:87px;width:6px;height:6px;border-right:2px solid #4D6185;border-bottom:2px solid #4D6185;transform:rotate(225deg)"></div>
<div class="a" style="left:934px;top:98px;width:15px;height:594px;border:1px solid #F0F4FE;border-radius:2px;box-shadow:0 0 0 0.5px #C4D2F4;background:linear-gradient(90deg,#CAD8FC,#B6C9F6)"></div>
<div class="a" style="left:937px;top:391px;width:8px;height:1px;background:#EEF3FE;box-shadow:1px 1px 0 #8CA4E0"></div>
<div class="a" style="left:937px;top:393px;width:8px;height:1px;background:#EEF3FE;box-shadow:1px 1px 0 #8CA4E0"></div>
<div class="a" style="left:937px;top:395px;width:8px;height:1px;background:#EEF3FE;box-shadow:1px 1px 0 #8CA4E0"></div>
<div class="a" style="left:937px;top:397px;width:8px;height:1px;background:#EEF3FE;box-shadow:1px 1px 0 #8CA4E0"></div>
<div class="a" style="left:934px;top:708px;width:15px;height:16px;border:1px solid #F0F4FE;border-radius:2px;box-shadow:0 0 0 0.5px #C4D2F4;background:linear-gradient(90deg,#D0DCFC,#B9CCF8)"></div>
<div class="a" style="left:938px;top:712px;width:6px;height:6px;border-right:2px solid #4D6185;border-bottom:2px solid #4D6185;transform:rotate(45deg)"></div>
<div class="a" style="left:6px;top:726px;width:16px;height:16px;border:1px solid #F0F4FE;border-radius:2px;box-shadow:0 0 0 0.5px #C4D2F4;background:linear-gradient(#D0DCFC,#B9CCF8)"></div>
<div class="a" style="left:12px;top:731px;width:6px;height:6px;border-right:2px solid #4D6185;border-bottom:2px solid #4D6185;transform:rotate(135deg)"></div>
<div class="a" style="left:23px;top:726px;width:848px;height:16px;border:1px solid #F0F4FE;border-radius:2px;box-shadow:0 0 0 0.5px #C4D2F4;background:linear-gradient(#CAD8FC,#B6C9F6)"></div>
<div class="a" style="left:443px;top:730px;width:1px;height:8px;background:#EEF3FE;box-shadow:1px 1px 0 #8CA4E0"></div>
<div class="a" style="left:445px;top:730px;width:1px;height:8px;background:#EEF3FE;box-shadow:1px 1px 0 #8CA4E0"></div>
<div class="a" style="left:447px;top:730px;width:1px;height:8px;background:#EEF3FE;box-shadow:1px 1px 0 #8CA4E0"></div>
<div class="a" style="left:449px;top:730px;width:1px;height:8px;background:#EEF3FE;box-shadow:1px 1px 0 #8CA4E0"></div>
<div class="a" style="left:917px;top:726px;width:16px;height:16px;border:1px solid #F0F4FE;border-radius:2px;box-shadow:0 0 0 0.5px #C4D2F4;background:linear-gradient(#D0DCFC,#B9CCF8)"></div>
<div class="a" style="left:920px;top:731px;width:6px;height:6px;border-right:2px solid #4D6185;border-bottom:2px solid #4D6185;transform:rotate(-45deg)"></div>
<div class="a" style="left:4px;top:742px;width:948px;height:24px;background:linear-gradient(#F4F2EA,#EEEBDD 8px,#EAE7D6)"></div>
<div class="a" style="left:4px;top:742px;width:948px;height:1px;background:#fff"></div>
<div class="a" style="left:4px;top:743px;width:948px;height:1px;background:#D8D5C8"></div>
<div class="a" style="left:538px;top:747px;width:1px;height:16px;background:#ACA899;box-shadow:1px 0 0 #fff"></div>
<div class="a" style="left:595px;top:747px;width:1px;height:16px;background:#ACA899;box-shadow:1px 0 0 #fff"></div>
<div class="a" style="left:675px;top:747px;width:1px;height:16px;background:#ACA899;box-shadow:1px 0 0 #fff"></div>
<div class="a" style="left:808px;top:747px;width:1px;height:16px;background:#ACA899;box-shadow:1px 0 0 #fff"></div>
<div class="t" style="left:541px;top:750px;">Cash</div>
<div class="t" style="left:598px;top:750px;">Spent today</div>
<div class="t" style="left:680px;top:750px;">Current amount</div>
<div class="t" style="left:812px;top:750px;">Fri</div>
<div class="a" style="left:566px;top:752px;width:25px;height:8px;border-radius:3px;background-color:#0A0A0A;background-image:radial-gradient(circle,#F4F2EA 0 0.7px,transparent 1.1px);background-size:3px 3px;background-position:1px 0"></div>
<div class="a" style="left:655px;top:752px;width:21px;height:8px;border-radius:3px;background-color:#0A0A0A;background-image:radial-gradient(circle,#F4F2EA 0 0.7px,transparent 1.1px);background-size:3px 3px;background-position:1px 0"></div>
<div class="a" style="left:756px;top:752px;width:40px;height:8px;border-radius:3px;background-color:#0A0A0A;background-image:radial-gradient(circle,#F4F2EA 0 0.7px,transparent 1.1px);background-size:3px 3px;background-position:1px 0"></div>
<div class="a" style="left:793px;top:748px;width:18px;height:12px;border-radius:5px 8px 3px 3px;background-color:#0A0A0A;background-image:radial-gradient(circle,#F4F2EA 0 0.7px,transparent 1.1px);background-size:3px 3px;background-position:1px 0"></div>
<div class="a" style="left:823px;top:752px;width:114px;height:8px;border-radius:3px;background-color:#0A0A0A;background-image:radial-gradient(circle,#F4F2EA 0 0.7px,transparent 1.1px);background-size:3px 3px;background-position:1px 0"></div>
<div class="a" style="left:946px;top:752px;width:2px;height:2px;background:#C3BFAE;box-shadow:1px 1px 0 #fff"></div>
<div class="a" style="left:946px;top:756px;width:2px;height:2px;background:#C3BFAE;box-shadow:1px 1px 0 #fff"></div>
<div class="a" style="left:942px;top:756px;width:2px;height:2px;background:#C3BFAE;box-shadow:1px 1px 0 #fff"></div>
<div class="a" style="left:946px;top:760px;width:2px;height:2px;background:#C3BFAE;box-shadow:1px 1px 0 #fff"></div>
<div class="a" style="left:942px;top:760px;width:2px;height:2px;background:#C3BFAE;box-shadow:1px 1px 0 #fff"></div>
<div class="a" style="left:938px;top:760px;width:2px;height:2px;background:#C3BFAE;box-shadow:1px 1px 0 #fff"></div>
</body></html>
